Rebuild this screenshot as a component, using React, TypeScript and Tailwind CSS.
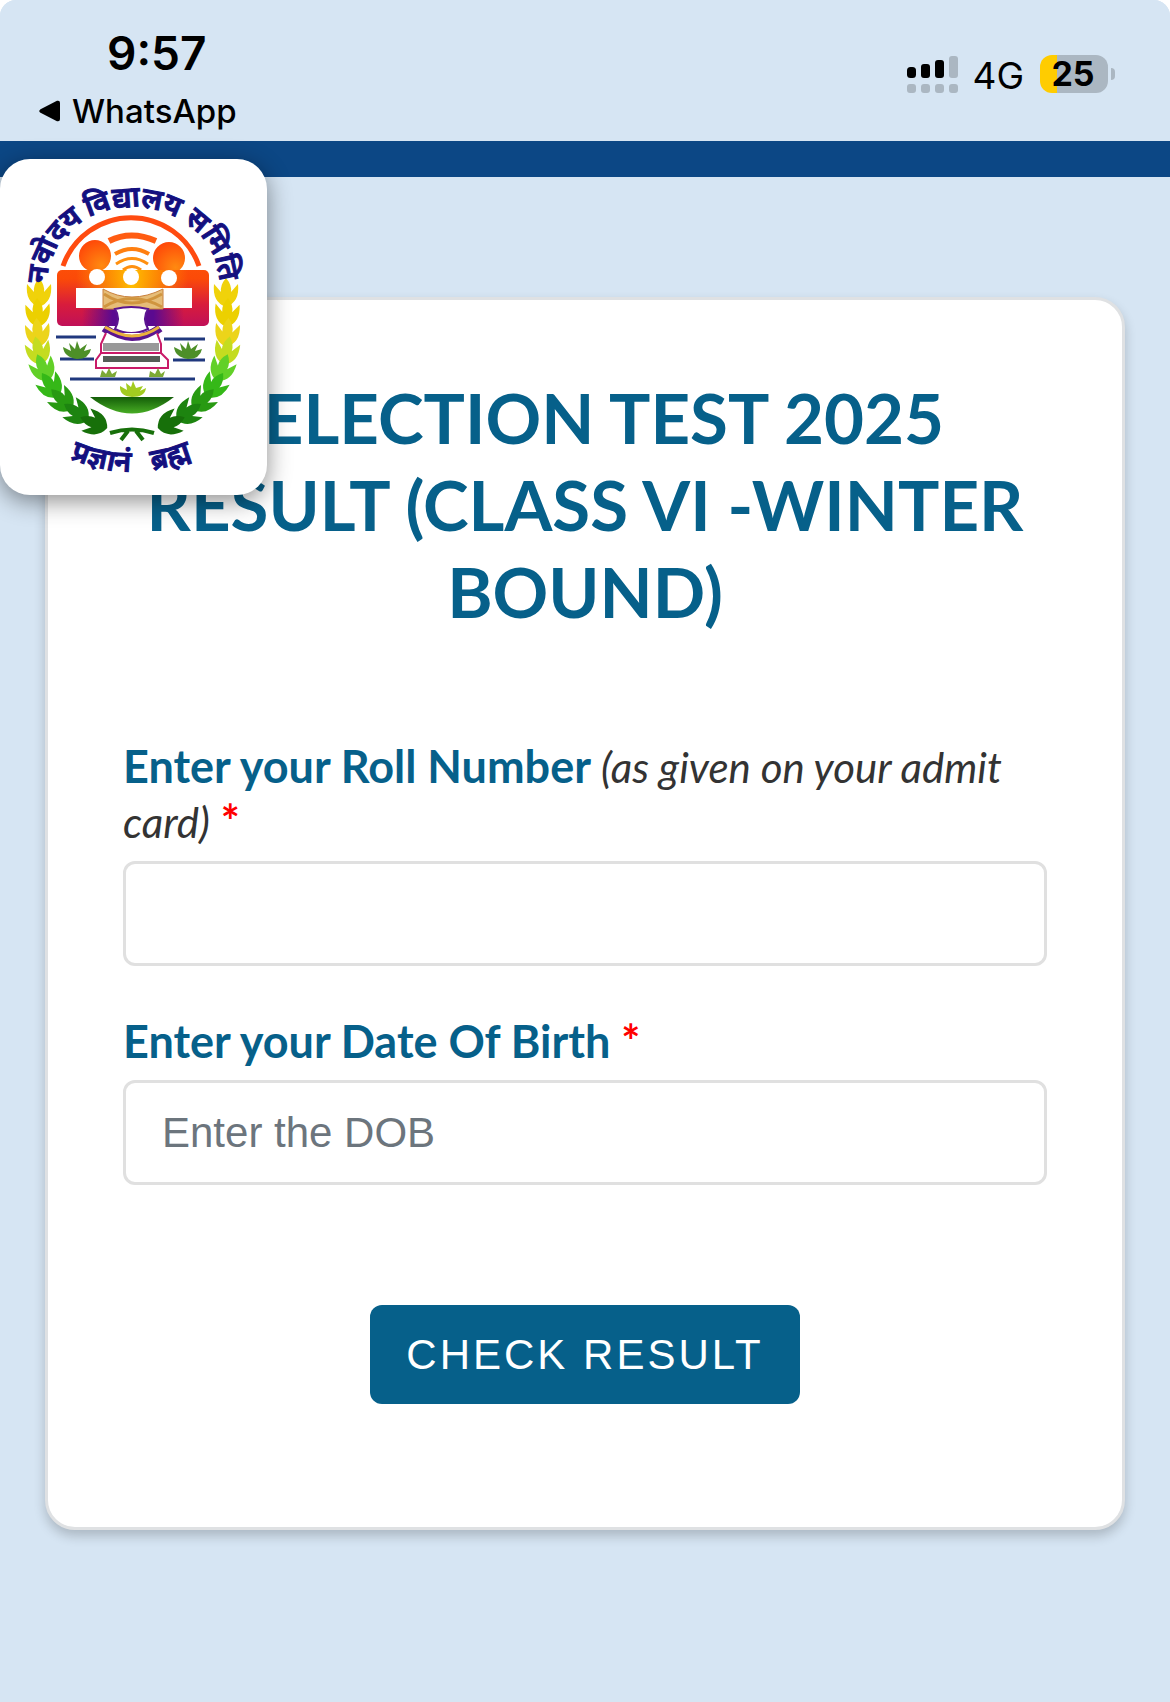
import React from "react";

function SignalIcon() {
  return (
    <svg width="51" height="38" viewBox="0 0 51 38" aria-hidden="true">
      <g fill="#000">
        <rect x="0" y="12" width="9" height="11" rx="3.5" />
        <rect x="14" y="9" width="9" height="14" rx="3" />
        <rect x="28" y="5" width="9" height="18" rx="3" />
      </g>
      <g fill="#abb7c2">
        <rect x="42" y="1" width="9" height="22" rx="3" />
        <rect x="0" y="29" width="9" height="9" rx="3" />
        <rect x="14" y="29" width="9" height="9" rx="3" />
        <rect x="28" y="29" width="9" height="9" rx="3" />
        <rect x="42" y="29" width="9" height="9" rx="3" />
      </g>
    </svg>
  );
}

function StatusBar() {
  return (
    <header className="flex h-[141px] items-start justify-between bg-[#d6e5f3] pr-[55px] pl-[39px] font-['Inter',sans-serif] text-black">
      <div className="pt-6">
        <div className="pl-[68px] text-[46px] leading-[58px] font-semibold">9:57</div>
        <button type="button" className="flex items-center gap-3 text-[33px] leading-[58px] font-medium">
          <svg width="21" height="22" viewBox="0 0 21 22" aria-hidden="true">
            <path d="M1.5 9.2 18 .8Q21 0 21 3V19Q21 22 18 21.2L1.5 12.8Q-1 11 1.5 9.2Z" />
          </svg>
          WhatsApp
        </button>
      </div>
      <div className="flex items-start pt-[55px]">
        <SignalIcon />
        <span className="ml-[14px] text-[37px] leading-[42px]">4G</span>
        <div className="ml-4 flex items-center gap-[3px]">
          <div className="h-[38px] w-[68px] rounded-xl bg-linear-to-r from-[#ffcc00] from-25% to-[#abb7c2] to-25% pr-0.5 text-center text-[34px] leading-[38px] font-bold">
            25
          </div>
          <div className="h-3 w-1 rounded-r-full bg-[#abb7c2]" />
        </div>
      </div>
    </header>
  );
}

const leaves = [
  [39, 296, 0, "#f0d20a"],
  [38, 316, -3, "#ecd000"],
  [38, 336, -5, "#ecd41a"],
  [39, 354, -12, "#c4dc20"],
  [44, 371, -22, "#62d028"],
  [52, 388, -34, "#35b818"],
  [64, 402, -45, "#289a12"],
  [79, 414, -56, "#1d8410"],
  [97, 424, -68, "#17700a"],
] as const;

function Leaves() {
  return (
    <g>
      {leaves.map(([x, y, r, fill]) => (
        <g key={y} transform={`translate(${x} ${y}) rotate(${r})`} fill={fill}>
          <path d="M0 11Q-14 6-12-12L-5-4Q-6-11 0-18Q6-11 5-4L12-12Q14 6 0 11Z" />
        </g>
      ))}
    </g>
  );
}

function Emblem() {
  return (
    <svg viewBox="0 0 267 336" className="w-full" role="img" aria-label="नवोदय विद्यालय समिति">
      <defs>
        <linearGradient id="people" gradientUnits="userSpaceOnUse" x1="0" y1="240" x2="0" y2="326">
          <stop offset="0" stopColor="#ff5a0a" />
          <stop offset=".45" stopColor="#fb4a08" />
          <stop offset=".75" stopColor="#d81c3c" />
          <stop offset="1" stopColor="#c01058" />
        </linearGradient>
        <radialGradient id="face" cx=".7" cy=".8" r=".9">
          <stop offset="0" stopColor="#ff8a10" />
          <stop offset="1" stopColor="#ff4408" />
        </radialGradient>
        <linearGradient id="glow" x1="0" x2="1">
          <stop offset="0" stopColor="#ffb400" stopOpacity="0" />
          <stop offset=".5" stopColor="#ffbe00" />
          <stop offset="1" stopColor="#ffb400" stopOpacity="0" />
        </linearGradient>
        <linearGradient id="bowl" x1="0" y1="0" x2="0" y2="1">
          <stop offset="0" stopColor="#135d08" />
          <stop offset="1" stopColor="#48ad24" />
        </linearGradient>
        <linearGradient id="dusk" x1="0" x2="1">
          <stop offset="0" stopColor="#5b0a90" stopOpacity="0" />
          <stop offset=".3" stopColor="#5b0a90" />
          <stop offset=".7" stopColor="#5b0a90" />
          <stop offset="1" stopColor="#5b0a90" stopOpacity="0" />
        </linearGradient>
        <path id="topArc" d="M47 284A86 77 0 0 1 219 284" />
        <path id="lowArc" d="M56 452Q132 492 210 450" />
      </defs>
      <g transform="translate(0 -159)">
        <path d="M63 266A72 72 0 0 1 199 266" fill="none" stroke="#ff4b10" strokeWidth="5" />
        <path d="M109 241Q131 230 156 241" fill="none" stroke="#ff5c12" strokeWidth="6" />
        <path d="M115 254Q132 244 149 254" fill="none" stroke="#ff7f10" strokeWidth="4" />
        <path d="M116 264Q132 253 148 264M123 270Q132 263 141 270" fill="none" stroke="#ff9010" strokeWidth="3" />
        <circle cx="95" cy="256" r="16" fill="url(#face)" />
        <circle cx="169" cy="258" r="16" fill="url(#face)" />
        <rect x="57" y="270" width="152" height="56" rx="5" fill="url(#people)" />
        <rect x="76" y="270" width="112" height="18" fill="url(#glow)" />
        <rect x="82" y="309" width="102" height="17" fill="url(#dusk)" />
        <rect x="76" y="288" width="116" height="20" fill="#fff" />
        <circle cx="97" cy="277" r="8" fill="#fff" />
        <circle cx="131" cy="277" r="8" fill="#fff" />
        <circle cx="169" cy="278" r="8" fill="#fff" />
        <path d="M103 289Q131 305 163 289V309H103Z" fill="#e6bd78" stroke="#c9803c" />
        <path d="M104 307Q131 290 162 307M104 294Q131 312 162 294" fill="none" stroke="#d0953f" strokeWidth="3" />
        <path d="M118 288Q131 300 146 288Z" fill="#fff" />
        <path d="M104 328Q120 339 132 337Q146 339 160 328" fill="none" stroke="#5b1590" strokeWidth="8" />
        <path d="M115 309Q131 305 148 309Q142 318 148 329Q131 337 115 329Q121 318 115 309Z" fill="#fff" stroke="#5b1590" strokeWidth="2" />
        <g fill="#fff" stroke="#c91b68" strokeWidth="2">
          <path d="M106 333 101 344V353H161V344L157 333M101 353 96 360V368H168V360L161 353" />
        </g>
        <path d="M105 328Q120 338 132 338Q146 338 159 328" fill="none" stroke="#5b1590" strokeWidth="6" />
        <path d="M105 327Q120 336 132 336Q146 336 159 327" fill="none" stroke="#eab13d" strokeWidth="3" />
        <rect x="103" y="343" width="56" height="8" fill="#999" />
        <rect x="103" y="356" width="57" height="6" fill="#555e57" />
        <g stroke="#20387e" strokeWidth="3">
          <path d="M56 337H96M60 359H94M164 339H205M173 360H205M70 379H195" />
        </g>
        <g fill="#4d8f28">
          <path id="bush" d="M77 359Q64 357 63 347L71 351 69 343 75 349 77 341 80 349 87 344 84 351 91 349Q89 359 77 359Z" />
          <use href="#bush" x="111" />
        </g>
        <path d="M100 377 102 370 106 374 109 368 112 374 117 371 115 377ZM149 377 150 371 155 374 158 368 161 374 165 371 163 377Z" fill="#7ca936" />
        <path d="M132 397Q119 396 120 386L127 390 126 383 131 387 133 381 136 388 143 386 140 391 146 388Q145 397 132 397Z" fill="#a2cb20" />
        <path d="M90 397H174Q132 430 90 397Z" fill="url(#bowl)" />
        <Leaves />
        <g transform="translate(265 0) scale(-1 1)">
          <Leaves />
        </g>
        <path d="M110 433Q132 426 154 433M121 440 128 431M143 440 136 431" fill="none" stroke="#17700a" strokeWidth="4" />
        <g fill="#14107f" stroke="#14107f" strokeWidth="1" fontFamily="'Noto Sans Devanagari','Noto Sans',sans-serif" fontSize="29" fontWeight="600" textAnchor="middle">
          <text>
            <textPath href="#topArc" startOffset="15%">नवोदय</textPath>
          </text>
          <text>
            <textPath href="#topArc" startOffset="50%">विद्यालय</textPath>
          </text>
          <text>
            <textPath href="#topArc" startOffset="85%">समिति</textPath>
          </text>
          <text>
            <textPath href="#lowArc" startOffset="29%">प्रज्ञानं</textPath>
          </text>
          <text>
            <textPath href="#lowArc" startOffset="75%">ब्रह्म</textPath>
          </text>
        </g>
      </g>
    </svg>
  );
}

function FieldLabel({ htmlFor, title, hint }: { htmlFor: string; title: string; hint?: string }) {
  return (
    <label htmlFor={htmlFor} className="block text-[45px] leading-[54px] font-bold text-[#06608a]">
      {title} {hint && <i className="text-[42px] font-normal text-[#333]">{hint}</i>}
      {hint && " "}
      <span className="text-[#f00]">*</span>
    </label>
  );
}

const inputClass =
  "mt-3 block h-[105px] w-full rounded-xl border-3 border-[#e0e0e0] bg-white px-9 font-['Liberation_Sans',sans-serif] text-[42px] text-[#495057] outline-none placeholder:text-[#6c757d]";

export default function App() {
  return (
    <div className="bg-white">
      <div className="relative min-h-screen overflow-hidden rounded-t-2xl bg-[#d6e5f3] font-['Lato',sans-serif]">
        <StatusBar />
        <div className="h-9 bg-[#0c4785]" />
        <div className="absolute top-[159px] left-0 w-[267px] rounded-[30px] bg-white shadow-[0_6px_24px_rgba(0,0,0,0.45)]">
          <Emblem />
        </div>
        <main className="mx-[45px] mt-[120px] rounded-[30px] border-3 border-[#dfe1e3] bg-white px-[75px] pt-[74px] pb-[123px] shadow-[0_6px_12px_rgba(0,0,0,0.2)]">
          <h1 className="text-center text-[69px] leading-[87px] font-bold text-[#06608a]">
            SELECTION TEST 2025 RESULT (CLASS VI -WINTER BOUND)
          </h1>
          <form className="mt-[104px]" onSubmit={(e) => e.preventDefault()}>
            <FieldLabel htmlFor="roll" title="Enter your Roll Number" hint="(as given on your admit card)" />
            <input id="roll" type="text" className={inputClass} />
            <div className="mt-12">
              <FieldLabel htmlFor="dob" title="Enter your Date Of Birth" />
              <input id="dob" type="text" placeholder="Enter the DOB" className={inputClass} />
            </div>
            <div className="mt-30 flex justify-center">
              <button
                type="submit"
                className="h-[99px] rounded-xl bg-[#06608a] px-9 font-['Liberation_Sans',sans-serif] text-[42px] tracking-[3px] text-white"
              >
                CHECK RESULT
              </button>
            </div>
          </form>
        </main>
      </div>
    </div>
  );
}
